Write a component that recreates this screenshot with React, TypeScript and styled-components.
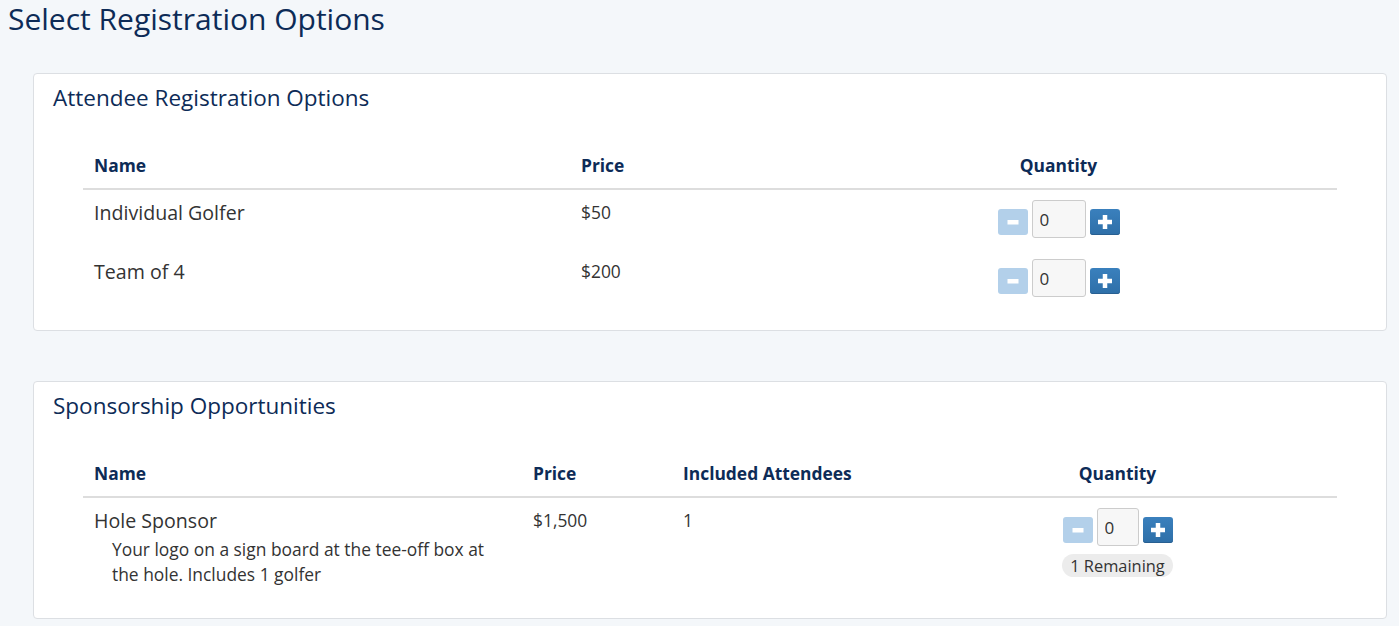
import styled, { createGlobalStyle } from 'styled-components';

const GlobalStyle = createGlobalStyle`
  html, body {
    margin: 0;
    padding: 0;
    background: #f4f7fa;
    font-family: 'Open Sans', 'Noto Sans', sans-serif;
    color: #333;
  }
`;

interface Column {
  label: string;
  width: number;
  center?: boolean;
}

interface Option {
  name: string;
  price: string;
  attendees?: string;
  description?: string;
  remaining?: string;
}

const attendeeColumns: Column[] = [
  { label: 'Name', width: 487 },
  { label: 'Price', width: 210 },
  { label: 'Quantity', width: 557, center: true },
];

const sponsorColumns: Column[] = [
  { label: 'Name', width: 439 },
  { label: 'Price', width: 150 },
  { label: 'Included Attendees', width: 226 },
  { label: 'Quantity', width: 439, center: true },
];

const attendeeOptions: Option[] = [
  { name: 'Individual Golfer', price: '$50' },
  { name: 'Team of 4', price: '$200' },
];

const sponsorOptions: Option[] = [
  {
    name: 'Hole Sponsor',
    price: '$1,500',
    attendees: '1',
    description:
      'Your logo on a sign board at the tee-off box at the hole. Includes 1 golfer',
    remaining: '1 Remaining',
  },
];

const MinusIcon = () => (
  <svg width="12" height="12" viewBox="0 0 12 12">
    <rect x="0.5" y="4" width="11" height="4.5" fill="#fff" />
  </svg>
);

const PlusIcon = () => (
  <svg width="14" height="14" viewBox="0 0 14 14">
    <rect x="0" y="4.75" width="14" height="4.5" fill="#fff" />
    <rect x="4.75" y="0" width="4.5" height="14" fill="#fff" />
  </svg>
);

const Stepper = ({ inputWidth }: { inputWidth: number }) => (
  <StepperBox>
    <StepButton $variant="minus" aria-label="decrease">
      <MinusIcon />
    </StepButton>
    <QtyInput $width={inputWidth} defaultValue="0" />
    <StepButton $variant="plus" aria-label="increase">
      <PlusIcon />
    </StepButton>
  </StepperBox>
);

interface SectionProps {
  title: string;
  columns: Column[];
  options: Option[];
  inputWidth: number;
}

const Section = ({ title, columns, options, inputWidth }: SectionProps) => (
  <Card>
    <CardTitle>{title}</CardTitle>
    <Table>
      <colgroup>
        {columns.map((c) => (
          <col key={c.label} style={{ width: c.width }} />
        ))}
      </colgroup>
      <thead>
        <tr>
          {columns.map((c) => (
            <HeadCell key={c.label} $center={c.center}>
              {c.label}
            </HeadCell>
          ))}
        </tr>
      </thead>
      <tbody>
        {options.map((o) => (
          <tr key={o.name}>
            <Cell>
              <OptionName>{o.name}</OptionName>
              {o.description && <OptionDesc>{o.description}</OptionDesc>}
            </Cell>
            <Cell>{o.price}</Cell>
            {columns.length > 3 && <Cell>{o.attendees}</Cell>}
            <Cell $center>
              <QuantityBox>
                <Stepper inputWidth={inputWidth} />
                {o.remaining && <Badge>{o.remaining}</Badge>}
              </QuantityBox>
            </Cell>
          </tr>
        ))}
      </tbody>
    </Table>
  </Card>
);

const App = () => (
  <>
    <GlobalStyle />
    <Page>
      <PageTitle>Select Registration Options</PageTitle>
      <Sections>
        <Section
          title="Attendee Registration Options"
          columns={attendeeColumns}
          options={attendeeOptions}
          inputWidth={54}
        />
        <Section
          title="Sponsorship Opportunities"
          columns={sponsorColumns}
          options={sponsorOptions}
          inputWidth={42}
        />
      </Sections>
    </Page>
  </>
);

export default App;

const Page = styled.div`
  padding: 0 12px 8px 8px;
`;

const PageTitle = styled.h1`
  margin: 0;
  padding-top: 1px;
  font-size: 30px;
  font-weight: 400;
  line-height: 36px;
  color: #0d2b57;
`;

const Sections = styled.div`
  display: flex;
  flex-direction: column;
  gap: 50px;
  margin-top: 36px;
  margin-left: 25px;
`;

const Card = styled.div`
  background: #fff;
  border: 1px solid #dcdfe3;
  border-radius: 4px;
  padding: 12px 20px 22px 19px;
`;

const CardTitle = styled.h2`
  margin: 0 0 39px 0;
  font-size: 22.5px;
  font-weight: 400;
  line-height: 24px;
  color: #0d2b57;
`;

const Table = styled.table`
  width: 1254px;
  margin-left: 30px;
  border-collapse: collapse;
  table-layout: fixed;
  font-size: 17.4px;
  line-height: 24px;
`;

const HeadCell = styled.th<{ $center?: boolean }>`
  padding: 4px 11px 11px;
  border-bottom: 2px solid #dddddd;
  text-align: ${({ $center }) => ($center ? 'center' : 'left')};
  font-weight: 700;
  color: #0d2b57;
`;

const Cell = styled.td<{ $center?: boolean }>`
  padding: 10px 11px 11px;
  height: 38px;
  vertical-align: top;
  text-align: ${({ $center }) => ($center ? 'center' : 'left')};
  color: #333;
`;

const OptionName = styled.div`
  font-size: 19.6px;
  line-height: 26px;
`;

const OptionDesc = styled.div`
  padding-left: 18px;
  font-size: 17.4px;
  line-height: 25px;
  margin: 3px 0 -2px;
`;

const QuantityBox = styled.div`
  display: flex;
  flex-direction: column;
  align-items: center;
  gap: 8px;
`;

const StepperBox = styled.div`
  display: flex;
  align-items: flex-end;
  gap: 4px;
`;

const StepButton = styled.button<{ $variant: 'minus' | 'plus' }>`
  display: flex;
  align-items: center;
  justify-content: center;
  width: 30px;
  height: 26px;
  margin-bottom: 3px;
  padding: 0;
  border: none;
  border-radius: 3px;
  cursor: pointer;
  background: ${({ $variant }) =>
    $variant === 'plus'
      ? 'linear-gradient(#3a80bd, #2e6fa8)'
      : '#b3d0ea'};
  box-shadow: ${({ $variant }) =>
    $variant === 'plus' ? 'inset 0 -1px 0 #285f91' : 'none'};
`;

const QtyInput = styled.input<{ $width: number }>`
  box-sizing: border-box;
  width: ${({ $width }) => $width}px;
  height: 38px;
  padding: 0 7px;
  border: 1px solid #cccccc;
  border-radius: 3px;
  background: #f7f7f7;
  font-family: inherit;
  font-size: 17px;
  color: #333;
`;

const Badge = styled.span`
  display: inline-block;
  padding: 0 8px;
  height: 23px;
  line-height: 23px;
  border-radius: 12px;
  background: #ececec;
  font-size: 16.4px;
  color: #333;
`;
